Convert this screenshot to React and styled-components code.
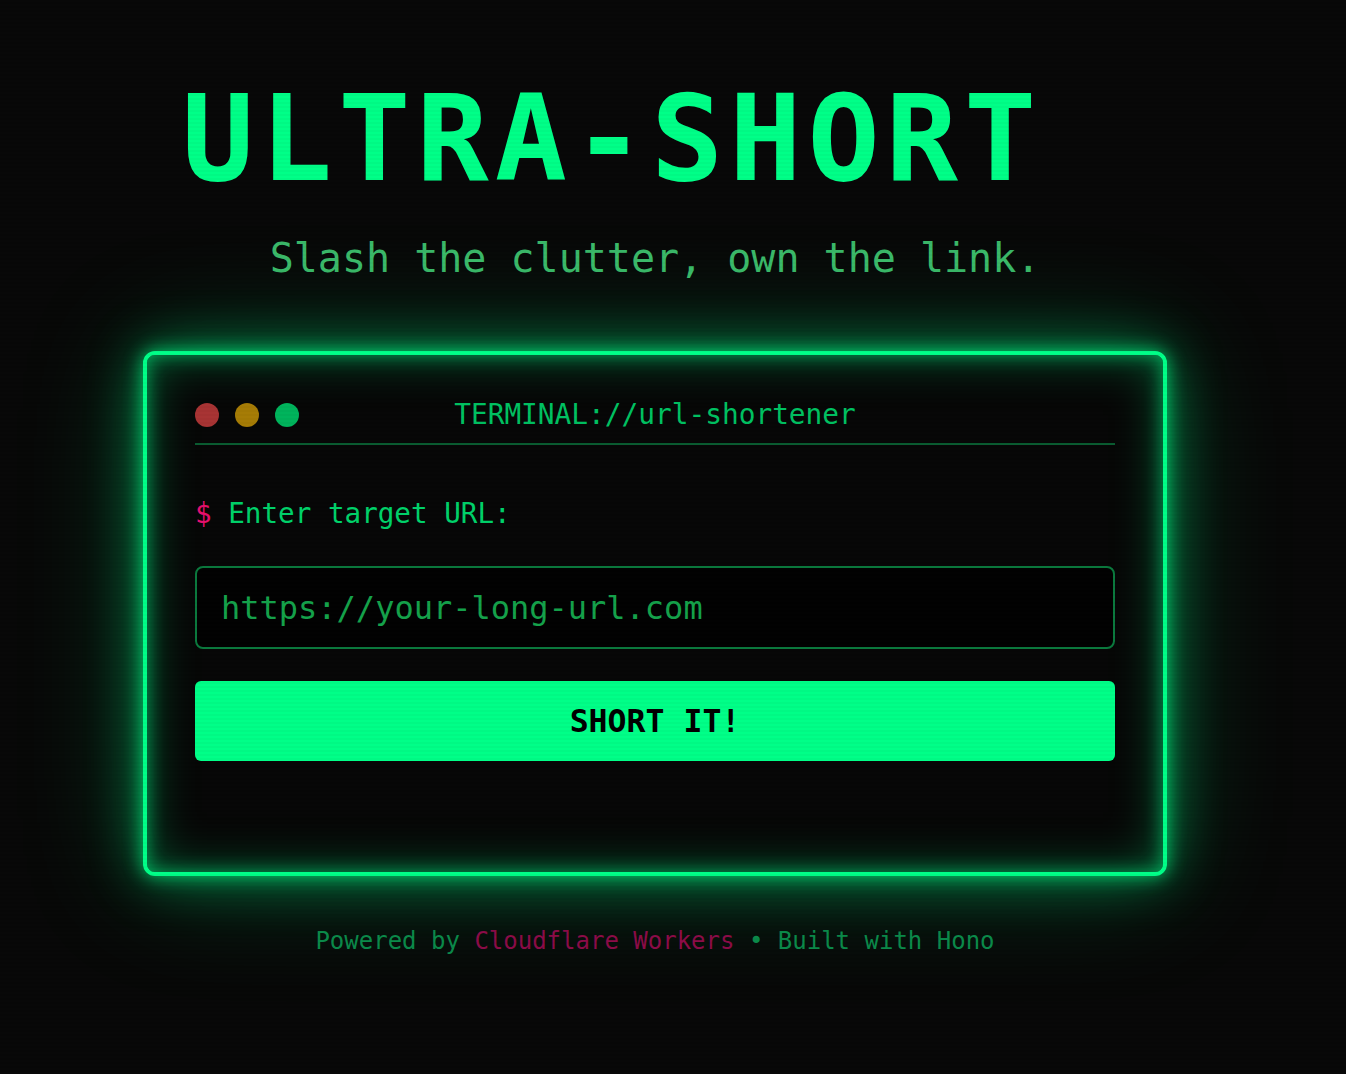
import React, { useState } from 'react';
import styled, { createGlobalStyle } from 'styled-components';

const GlobalStyle = createGlobalStyle`
  html, body {
    margin: 0;
    padding: 0;
    background: #080808;
    font-family: 'DejaVu Sans Mono', 'Liberation Mono', monospace;
  }
  * {
    box-sizing: border-box;
  }
`;

const Page = styled.div`
  min-height: 1074px;
  display: flex;
  flex-direction: column;
  align-items: center;
  padding: 79px 36px 0 0;
  background: #080808;
`;

const Scanlines = styled.div`
  position: fixed;
  inset: 0;
  pointer-events: none;
  background: repeating-linear-gradient(
    to bottom,
    rgba(0, 0, 0, 0) 0px,
    rgba(0, 0, 0, 0) 2px,
    rgba(0, 0, 0, 0.025) 2px,
    rgba(0, 0, 0, 0.025) 4px
  );
`;

const Title = styled.h1`
  margin: 0 86px 0 0;
  font-size: 120px;
  line-height: 1;
  font-weight: 700;
  letter-spacing: 6px;
  color: #00ff88;
`;

const Tagline = styled.p`
  margin: 35px 0 0;
  font-size: 40px;
  line-height: 48px;
  color: #3cb96a;
`;

const Terminal = styled.section`
  margin-top: 69px;
  width: 1024px;
  padding: 47px 48px 111px;
  background: #070707;
  border: 4px solid #00ff88;
  border-radius: 12px;
  box-shadow:
    0 0 18px rgba(0, 255, 136, 0.7),
    0 0 55px rgba(0, 255, 136, 0.45),
    0 0 120px rgba(0, 255, 136, 0.25),
    inset 0 0 18px rgba(0, 255, 136, 0.55),
    inset 0 0 50px rgba(0, 255, 136, 0.35);
`;

const TermHeader = styled.div`
  display: flex;
  align-items: center;
  height: 43px;
  padding-bottom: 15px;
  border-bottom: 2px solid #0a5c31;
`;

const Dots = styled.div`
  display: flex;
  gap: 16px;
`;

const Dot = styled.span`
  width: 24px;
  height: 24px;
  border-radius: 50%;
  background: ${(p) => p.color};
`;

const TermTitle = styled.div`
  flex: 1;
  margin-left: -104px;
  text-align: center;
  font-size: 27.8px;
  line-height: 26px;
  color: #00c262;
`;

const Prompt = styled.label`
  display: block;
  margin-top: 52px;
  font-size: 27.6px;
  line-height: 34px;
  color: #00d26a;
  span {
    color: #e8106e;
  }
`;

const UrlInput = styled.input`
  display: block;
  width: 100%;
  height: 83px;
  margin-top: 35px;
  padding: 0 24px;
  background: #020202;
  border: 2px solid #0b7a3e;
  border-radius: 8px;
  font-family: 'DejaVu Sans Mono', 'Liberation Mono', monospace;
  font-size: 32px;
  color: #14c458;
  outline: none;
  &::placeholder {
    color: #15a24b;
  }
`;

const ShortButton = styled.button`
  display: block;
  width: 100%;
  height: 80px;
  margin-top: 32px;
  border: none;
  border-radius: 6px;
  background: #00ff88;
  font-family: 'DejaVu Sans Mono', 'Liberation Mono', monospace;
  font-weight: 700;
  font-size: 31.5px;
  color: #000;
  cursor: pointer;
`;

const Footer = styled.footer`
  margin-top: 51px;
  font-size: 24px;
  line-height: 28.8px;
  color: #0b8a4a;
  span {
    color: #8c0c48;
  }
`;

export default function App() {
  const [url, setUrl] = useState('');
  return (
    <Page>
      <GlobalStyle />
      <Title>ULTRA-SHORT</Title>
      <Tagline>Slash the clutter, own the link.</Tagline>
      <Terminal>
        <TermHeader>
          <Dots>
            <Dot color="#a83434" />
            <Dot color="#a67c06" />
            <Dot color="#00b45c" />
          </Dots>
          <TermTitle>TERMINAL://url-shortener</TermTitle>
        </TermHeader>
        <Prompt htmlFor="url">
          <span>$</span> Enter target URL:
        </Prompt>
        <UrlInput
          id="url"
          value={url}
          onChange={(e) => setUrl(e.target.value)}
          placeholder="https://your-long-url.com"
        />
        <ShortButton type="button">SHORT IT!</ShortButton>
      </Terminal>
      <Footer>
        Powered by <span>Cloudflare Workers</span> • Built with Hono
      </Footer>
      <Scanlines />
    </Page>
  );
}
